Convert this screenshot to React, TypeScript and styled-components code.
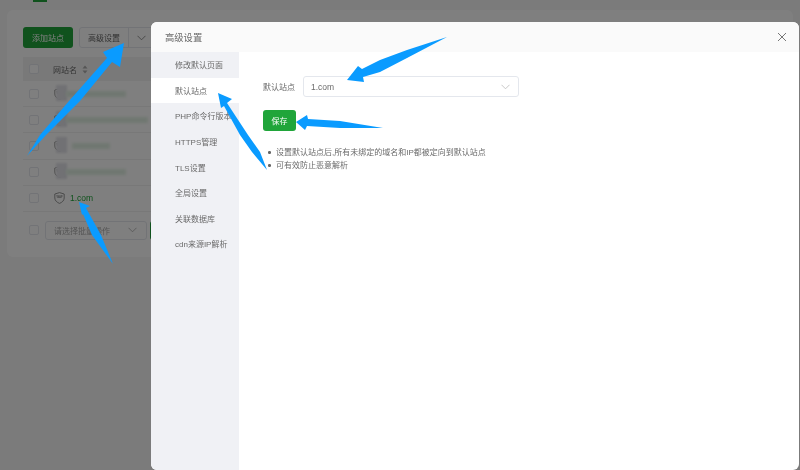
import React from 'react';
import styled, {createGlobalStyle} from 'styled-components';

const GlobalStyle = createGlobalStyle`
  html, body {
    margin: 0;
    padding: 0;
    width: 800px;
    height: 470px;
    overflow: hidden;
  }
  body {
    font-family: "Liberation Sans", "Noto Sans CJK SC", sans-serif;
  }
`;

const rows = [
  {nameWidth: 60, nameOffset: -4},
  {nameWidth: 82, nameOffset: -4},
  {nameWidth: 38, nameOffset: 2},
  {nameWidth: 60, nameOffset: -4}
];

const menuItems = ['修改默认页面', '默认站点', 'PHP命令行版本', 'HTTPS管理', 'TLS设置', '全局设置', '关联数据库', 'cdn来源IP解析'];

const ShieldIcon = () => (
  <svg width="11" height="12" viewBox="0 0 11 12" fill="none">
    <path d="M5.5 0.6 L10.2 2 V6 C10.2 8.6 8 10.4 5.5 11.4 C3 10.4 0.8 8.6 0.8 6 V2 Z" stroke="#8a8a8a" strokeWidth="0.9" />
    <text x="5.5" y="6.4" fontSize="2.8" fontWeight="700" fill="#8a8a8a" textAnchor="middle" fontFamily="Liberation Sans">WAF</text>
  </svg>
);

const Chevron = ({color}: {color: string}) => (
  <svg width="9" height="6" viewBox="0 0 9 6" fill="none">
    <path d="M0.5 0.8 L4.5 4.8 L8.5 0.8" stroke={color} strokeWidth="0.8" />
  </svg>
);

export default function App() {
  return (
    <>
      <GlobalStyle />
      <Page>
        <TabMark />
        <Card>
          <Toolbar>
            <AddButton>添加站点</AddButton>
            <SplitButton>
              <SplitLabel>高级设置</SplitLabel>
              <SplitArrow>
                <Chevron color="#777" />
              </SplitArrow>
            </SplitButton>
          </Toolbar>
          <TableHead>
            <Checkbox />
            <HeadLabel>网站名</HeadLabel>
            <SortMark>
              <svg width="6" height="9" viewBox="0 0 6 9">
                <path d="M3 0.5 L5.5 3.5 H0.5 Z M3 8.5 L0.5 5.5 H5.5 Z" fill="#aaa" />
              </svg>
            </SortMark>
          </TableHead>
          {rows.map((row, index) => (
            <Row key={index}>
              <Checkbox />
              <SiteCell>
                <ShieldIcon />
                <Mosaic />
                <BlurName $width={row.nameWidth} $offset={row.nameOffset} />
              </SiteCell>
            </Row>
          ))}
          <Row>
            <Checkbox />
            <SiteCell>
              <ShieldIcon />
              <SiteLink>1.com</SiteLink>
            </SiteCell>
          </Row>
          <Footer>
            <Checkbox />
            <BatchSelect>
              <span>请选择批量操作</span>
              <Chevron color="#aaa" />
            </BatchSelect>
            <BatchButton />
          </Footer>
        </Card>
        <Overlay />
        <Modal>
          <ModalHeader>
            <span>高级设置</span>
            <CloseIcon viewBox="0 0 10 10">
              <path d="M1 1 L9 9 M9 1 L1 9" stroke="#666" strokeWidth="0.9" />
            </CloseIcon>
          </ModalHeader>
          <ModalBody>
            <Sidebar>
              {menuItems.map((item, index) => (
                <MenuItem key={item} $active={index === 1}>
                  {item}
                </MenuItem>
              ))}
            </Sidebar>
            <Content>
              <FormRow>
                <FormLabel>默认站点</FormLabel>
                <SelectBox>
                  <span>1.com</span>
                  <Chevron color="#bbb" />
                </SelectBox>
              </FormRow>
              <SaveButton>保存</SaveButton>
              <Tips>
                <Tip>设置默认站点后,所有未绑定的域名和IP都被定向到默认站点</Tip>
                <Tip>可有效防止恶意解析</Tip>
              </Tips>
            </Content>
          </ModalBody>
        </Modal>
        <Arrows viewBox="0 0 800 470">
          <polygon points="27,156 40,135 69,101 107,58 103,52 124,43 120,67 112,62 80,101 46,135" />
          <polygon points="218,93 232,99 227,103 248,135 260,152 267,170 252,152 240,135 224,106 221,108" />
          <polygon points="347,80 358,66 362,69 380,60 407,50 447,37 407,58 380,72 363,77 364,82" />
          <polygon points="296,122 307,115 308,119 340,121 383,128 340,128 307,126 305,130" />
          <polygon points="79,202 90,206 86,208 101,235 113,264 92,235 83,214 82,215" />
        </Arrows>
      </Page>
    </>
  );
}

const Page = styled.div`
  position: relative;
  width: 800px;
  height: 470px;
  overflow: hidden;
  background: #f6f6f6;
  color: #6a6a6a;
  filter: blur(0.3px);
`;

const TabMark = styled.div`
  width: 14px;
  height: 2px;
  margin-left: 33px;
  margin-bottom: 8px;
  background: #20a53a;
`;

const Card = styled.div`
  box-sizing: border-box;
  height: 247px;
  margin: 0 7px;
  padding: 17px 16px 0;
  background: #fff;
  border-radius: 6px;
`;

const Toolbar = styled.div`
  display: flex;
  gap: 6px;
  height: 21px;
  margin-bottom: 9px;
`;

const AddButton = styled.div`
  display: flex;
  align-items: center;
  justify-content: center;
  width: 50px;
  background: #20a53a;
  border-radius: 3px;
  color: #fff;
  font-size: 8px;
`;

const SplitButton = styled.div`
  display: flex;
  border: 1px solid #e4e7ed;
  border-radius: 3px;
  font-size: 8px;
  color: #666;
`;

const SplitLabel = styled.div`
  display: flex;
  align-items: center;
  padding: 0 8px;
  border-right: 1px solid #e4e7ed;
`;

const SplitArrow = styled.div`
  display: flex;
  align-items: center;
  padding: 0 8px;
`;

const TableHead = styled.div`
  display: flex;
  align-items: center;
  height: 24px;
  padding-left: 5.5px;
  background: #f2f2f2;
  font-size: 8px;
`;

const Checkbox = styled.div`
  flex: none;
  box-sizing: border-box;
  width: 10px;
  height: 10px;
  background: #fff;
  border: 1px solid #e4e7ed;
  border-radius: 2px;
`;

const HeadLabel = styled.span`
  margin-left: 14.5px;
`;

const SortMark = styled.span`
  display: flex;
  margin-left: 5px;
`;

const Row = styled.div`
  display: flex;
  align-items: center;
  box-sizing: border-box;
  height: 26.2px;
  padding-left: 5.5px;
  border-bottom: 1px solid #f0f0f0;
`;

const SiteCell = styled.div`
  position: relative;
  display: flex;
  align-items: center;
  gap: 5px;
  margin-left: 15.5px;
`;

const Mosaic = styled.span`
  position: absolute;
  top: -3px;
  left: 2px;
  width: 11px;
  height: 16px;
  background: #e2e2e8;
  filter: blur(1px);
`;

const BlurName = styled.span<{$width: number; $offset: number}>`
  width: ${(p) => p.$width}px;
  height: 6px;
  margin-left: ${(p) => p.$offset}px;
  background: #e0efe2;
  filter: blur(1.5px);
`;

const SiteLink = styled.span`
  color: #20a53a;
  font-size: 8.5px;
`;

const Footer = styled.div`
  display: flex;
  align-items: center;
  gap: 6px;
  height: 19px;
  margin-top: 9px;
  padding-left: 6px;
`;

const BatchSelect = styled.div`
  display: flex;
  align-items: center;
  justify-content: space-between;
  box-sizing: border-box;
  width: 102px;
  height: 19px;
  padding: 0 9px 0 8px;
  border: 1px solid #e4e7ed;
  border-radius: 3px;
  font-size: 8px;
  color: #aaa;
`;

const BatchButton = styled.div`
  width: 30px;
  height: 19px;
  margin-left: -3px;
  background: #20a53a;
  border-radius: 3px;
`;

const Overlay = styled.div`
  position: absolute;
  inset: 0;
  background: rgba(0, 0, 0, 0.5);
`;

const Modal = styled.div`
  position: absolute;
  top: 22px;
  left: 151px;
  display: flex;
  flex-direction: column;
  width: 648px;
  height: 448px;
  overflow: hidden;
  background: #fff;
  border-radius: 6px;
`;

const ModalHeader = styled.div`
  display: flex;
  align-items: center;
  justify-content: space-between;
  flex: none;
  height: 30px;
  padding: 0 12px 0 14px;
  background: #fafafa;
  font-size: 9.3px;
  color: #6a6a6a;
`;

const CloseIcon = styled.svg`
  width: 10px;
  height: 10px;
`;

const ModalBody = styled.div`
  display: flex;
  flex: 1;
`;

const Sidebar = styled.div`
  flex: none;
  width: 88px;
  background: #f0f1f5;
`;

const MenuItem = styled.div<{$active: boolean}>`
  display: flex;
  align-items: center;
  height: 25.6px;
  padding-left: 24px;
  background: ${(p) => (p.$active ? '#fff' : 'transparent')};
  font-size: 8px;
  white-space: nowrap;
`;

const Content = styled.div`
  flex: 1;
  padding: 24px 0 0 24px;
`;

const FormRow = styled.div`
  display: flex;
  align-items: center;
  height: 21px;
`;

const FormLabel = styled.span`
  width: 40px;
  font-size: 8px;
`;

const SelectBox = styled.div`
  display: flex;
  align-items: center;
  justify-content: space-between;
  box-sizing: border-box;
  width: 216px;
  height: 21px;
  padding: 0 8px 0 7px;
  border: 1px solid #e4e7ed;
  border-radius: 3px;
  font-size: 8.5px;
`;

const SaveButton = styled.div`
  display: flex;
  align-items: center;
  justify-content: center;
  width: 33px;
  height: 21px;
  margin-top: 13px;
  background: #20a53a;
  border-radius: 3px;
  color: #fff;
  font-size: 8px;
`;

const Tips = styled.ul`
  margin: 15px 0 0;
  padding: 0 0 0 5px;
  list-style: none;
  font-size: 8px;
  line-height: 13px;
`;

const Tip = styled.li`
  display: flex;
  align-items: center;
  gap: 5.5px;

  &::before {
    content: '';
    flex: none;
    width: 2.5px;
    height: 2.5px;
    background: #666;
    border-radius: 50%;
  }
`;

const Arrows = styled.svg`
  position: absolute;
  inset: 0;
  width: 800px;
  height: 470px;
  fill: #0a9bff;
  pointer-events: none;
`;
